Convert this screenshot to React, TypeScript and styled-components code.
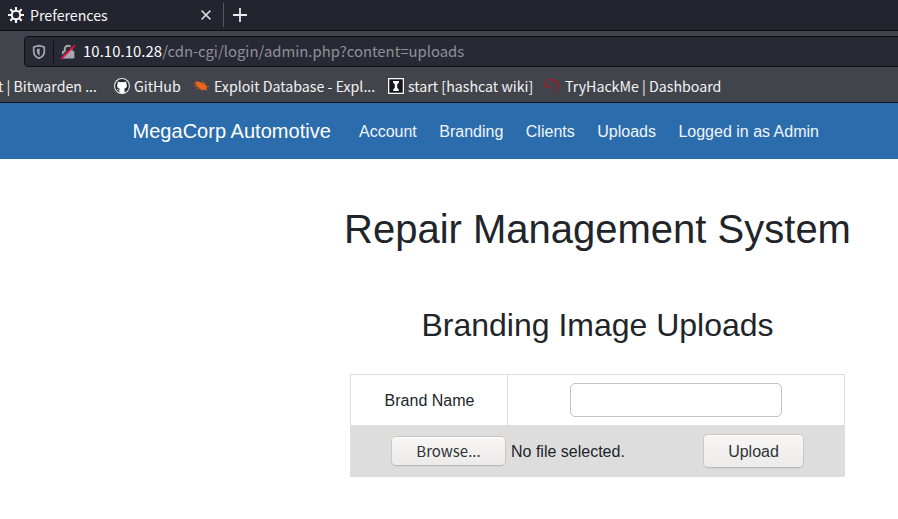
import React from "react";
import styled, { createGlobalStyle } from "styled-components";

const GlobalStyle = createGlobalStyle`
  *, *::before, *::after { box-sizing: border-box; }
  html, body { margin: 0; background: #fff; overflow: hidden; }
  body { font-family: "Liberation Sans", Arial, sans-serif; font-size: 16px; color: #212529; }
  svg { display: block; flex: none; }
`;

const Window = styled.div`
  width: 898px;
  height: 519px;
  overflow: hidden;
`;

const Chrome = styled.header`
  font-family: "Noto Sans CJK SC", "Noto Sans", sans-serif;
  font-size: 14.2px;
  color: #f3f3f4;
  white-space: nowrap;
`;

const TabStrip = styled.div`
  display: flex;
  align-items: center;
  height: 31px;
  padding: 0 0 1px 8px;
  background: #23252e;
  border-bottom: 1px solid #0d0e12;
`;

const TabTitle = styled.span`
  width: 171px;
  margin-left: 6px;
  line-height: 20px;
`;

const TabDivider = styled.span`
  width: 1px;
  height: 24px;
  margin: 0 9px 0 12px;
  background: #56585f;
`;

const Toolbar = styled.div`
  height: 36px;
  padding: 5px 0 0 24px;
  background: #42444b;
`;

const AddressBar = styled.div`
  display: flex;
  align-items: center;
  width: 890px;
  height: 31px;
  padding-left: 6px;
  background: #272a35;
  border: 1px solid #0f1014;
  border-radius: 4px;
`;

const AddressDivider = styled.span`
  width: 1px;
  height: 22px;
  margin: 0 6px;
  background: #0f1014;
`;

const Address = styled.span`
  margin-left: 7px;
  padding-bottom: 1px;
  font-size: 14.85px;
  line-height: 20px;
  color: #8f9197;
`;

const Host = styled.span`
  color: #fff;
  letter-spacing: 0.08px;
`;

const Bookmarks = styled.nav`
  display: flex;
  align-items: center;
  height: 36px;
  padding-top: 2px;
  background: #42444b;
  border-bottom: 1px solid #111217;
`;

const Bookmark = styled.span<{ $width: number; $gap?: number }>`
  display: flex;
  align-items: center;
  flex: none;
  gap: ${(p) => p.$gap ?? 4}px;
  width: ${(p) => p.$width}px;
  line-height: 20px;
`;

const CutBookmark = styled(Bookmark)`
  margin-left: -2px;
`;

const SiteNav = styled.nav`
  display: flex;
  align-items: center;
  height: 56px;
  padding-left: 132.5px;
  background: #2b6cad;
  color: #fff;
  white-space: nowrap;
`;

const Brand = styled.span`
  margin-right: 28px;
  font-size: 20px;
  line-height: 30px;
  letter-spacing: 0.03px;
`;

const Links = styled.div`
  display: flex;
  gap: 22.5px;
  padding-top: 2px;
  line-height: 24px;
  color: #f0f5fa;
`;

const Content = styled.main`
  width: 507px;
  margin-left: 344px;
  text-align: center;
`;

const Title = styled.h1`
  margin: 46px 0 0;
  font-size: 40px;
  font-weight: 400;
  line-height: 48px;
  white-space: nowrap;
`;

const Subtitle = styled.h2`
  margin: 53px 0 0;
  font-size: 32px;
  font-weight: 400;
  line-height: 38px;
`;

const Form = styled.form`
  width: 495px;
  margin: 30px 0 0 6px;
  border: 1px solid #ddd;
`;

const NameRow = styled.div`
  display: grid;
  grid-template-columns: 156px 1fr;
  height: 50px;
`;

const Cell = styled.div`
  display: flex;
  align-items: center;
  justify-content: center;
  & + & { border-left: 1px solid #ddd; }
`;

const Label = styled.label`
  padding: 2px 0 0 1px;
`;

const NameInput = styled.input`
  width: 212px;
  height: 34px;
  border: 1px solid #c8c3be;
  border-radius: 5px;
  background: #fff;
  outline: none;
`;

const FileRow = styled.div`
  display: flex;
  align-items: center;
  height: 51px;
  padding-left: 40px;
  background: #ddd;
`;

const Button = styled.button<{ $width: number; $height: number; $browser?: boolean }>`
  flex: none;
  width: ${(p) => p.$width}px;
  height: ${(p) => p.$height}px;
  padding: ${(p) => (p.$browser ? "0" : "2px 0 0")};
  font-family: ${(p) => (p.$browser ? '"Noto Sans CJK SC", "Noto Sans"' : '"Liberation Sans"')}, sans-serif;
  font-size: ${(p) => (p.$browser ? "15px" : "16px")};
  line-height: 20px;
  color: #2e3436;
  background: linear-gradient(#f7f6f5, #edebea);
  border: 1px solid #cdc7c2;
  border-bottom-color: #bfb8b1;
  border-radius: 5px;
  box-shadow: inset 0 1px #fff, 0 1px 1px rgba(0, 0, 0, 0.05);
`;

const FileStatus = styled.span`
  flex: none;
  width: 197px;
  padding: 2px 0 0 5px;
  text-align: left;
`;

const GearIcon = () => (
  <svg width="16" height="16" viewBox="0 0 16 16" fill="none" stroke="#f7f7f8">
    <circle cx="8" cy="8" r="4.2" strokeWidth="2" />
    <path strokeWidth="2.1" d="M8 0v3.5M8 12.5V16M0 8h3.5M12.5 8H16M2.3 2.3l2.5 2.5M11.2 11.2l2.5 2.5M13.7 2.3l-2.5 2.5M4.8 11.2l-2.5 2.5" />
  </svg>
);

const CloseIcon = () => (
  <svg width="10" height="10" viewBox="0 0 10 10" stroke="#d6d7d9" strokeWidth="1.5">
    <path d="M.6.6l8.8 8.8M9.4.6L.6 9.4" />
  </svg>
);

const PlusIcon = () => (
  <svg width="14" height="14" viewBox="0 0 14 14" stroke="#ececee" strokeWidth="1.8">
    <path d="M7 0v14M0 7h14" />
  </svg>
);

const ShieldIcon = () => (
  <svg width="16" height="16" viewBox="0 0 16 16">
    <path d="M8 1.7L13.3 3v4.2c0 3.4-2 5.9-5.3 7.1-3.3-1.2-5.3-3.7-5.3-7.1V3z" fill="none" stroke="#a6a8ad" strokeWidth="1.7" strokeLinejoin="round" />
    <path d="M8.2 4.4v7.4c1.8-1 2.7-2.6 2.7-4.7V5z" fill="#a6a8ad" transform="matrix(-1 0 0 1 16.8 0)" />
  </svg>
);

const LockIcon = () => (
  <svg width="16" height="16" viewBox="0 0 16 16">
    <path d="M4.8 7.4V5a3.3 3.3 0 0 1 6.6 0v2.4" fill="none" stroke="#a6a8ad" strokeWidth="2" />
    <rect x="2" y="6.8" width="12.4" height="7.8" rx="1.3" fill="#a6a8ad" />
    <path d="M.4 13.7L13.9 .3" stroke="#272a35" strokeWidth="1.6" />
    <path d="M1.2 14.9L14.8 1.3" stroke="#f30b43" strokeWidth="1.8" />
  </svg>
);

const GitHubIcon = () => (
  <svg width="16" height="16" viewBox="0 0 16 16">
    <circle cx="8" cy="8" r="8" fill="#e9e9e9" />
    <circle cx="8" cy="8" r="6.9" fill="#24272b" />
    <path fill="#fff" d="M5.4 15v-2.6c-1.7.3-2.2-.8-2.5-1.4l.8.1c.6.8.9 1 1.7.7.1-.5.3-.8.6-1-1.6-.2-2.9-1.1-2.9-3.4 0-.8.2-1.5.6-2-.2-.6-.2-1.3.1-2 .8 0 1.5.5 2 .8 1.4-.3 3-.3 4.4 0 .5-.3 1.2-.8 2-.8.3.7.3 1.4.1 2 .4.5.6 1.2.6 2 0 2.3-1.3 3.2-2.9 3.4.4.4.6.8.6 1.5V15a8 8 0 0 1-5.2 0z" />
  </svg>
);

const ExploitIcon = () => (
  <svg width="16" height="16" viewBox="0 0 16 16">
    <path fill="#ed641c" d="M2.2 3.5c2.5-.2 4.3.2 6 1.4 2.5 0 4.6 1.5 5.7 3.9l-.5 2.6c-2.8 1.3-5.8.5-7.6-1.6C4.2 8.8 2.8 6.8 2.2 3.5z" />
    <path fill="none" stroke="#d65d23" strokeWidth=".9" d="M.7 6l3.2.3M1.3 8.7l3.4-.2M4 11.3l2.3-1.6M8.6 12.8l.4-2.1M9.3 3.1L9 5.3M12 4.3l-1 2.2M13.2 8.4l2.2.1M12.5 11l1.8 1.2" />
  </svg>
);

const HashcatIcon = () => (
  <svg width="16" height="16" viewBox="0 0 16 16">
    <path fill="#f5f5f5" d="M0 0h16v16H0z" />
    <path fill="#151617" d="M1.3 1.3h13.4v13.4H1.3z" />
    <path fill="#f5f5f5" d="M5 3h6v1.5L9.2 6.6v2.8l1.6 2.3V13H5.2v-1.3l1.6-2.3V6.6L5 4.5z" />
  </svg>
);

const TryHackMeIcon = () => (
  <svg width="17" height="16" viewBox="0 0 17 16" fill="none">
    <path stroke="#b5161f" strokeWidth="1.1" d="M7 9H3.3C.2 8.7-.1 5.2 2.8 4.5 3.5 1 8.2.2 10 3.2c2.5-.5 4.2 1.2 3.8 3.2 1 .4 1.6 1 1.6 1.9" />
    <path stroke="#762832" strokeWidth=".9" d="M8 7.2h4M14 8.3h2M9.5 10h6M8.8 12h3M13.4 12H16M9.5 14h2M13 14h2" />
  </svg>
);

const links = ["Account", "Branding", "Clients", "Uploads", "Logged in as Admin"];

export default function App() {
  return (
    <Window>
      <GlobalStyle />
      <Chrome>
        <TabStrip>
          <GearIcon />
          <TabTitle>Preferences</TabTitle>
          <CloseIcon />
          <TabDivider />
          <PlusIcon />
        </TabStrip>
        <Toolbar>
          <AddressBar>
            <ShieldIcon />
            <AddressDivider />
            <LockIcon />
            <Address><Host>10.10.10.28</Host>/cdn-cgi/login/admin.php?content=uploads</Address>
          </AddressBar>
        </Toolbar>
        <Bookmarks>
          <CutBookmark $width={116}>t | Bitwarden ...</CutBookmark>
          <Bookmark $width={79}><GitHubIcon />GitHub</Bookmark>
          <Bookmark $width={195} $gap={5}><ExploitIcon />Exploit Database - Expl...</Bookmark>
          <Bookmark $width={156}><HashcatIcon />start [hashcat wiki]</Bookmark>
          <Bookmark $width={180}><TryHackMeIcon />TryHackMe | Dashboard</Bookmark>
        </Bookmarks>
      </Chrome>
      <SiteNav>
        <Brand>MegaCorp Automotive</Brand>
        <Links>{links.map((link) => <span key={link}>{link}</span>)}</Links>
      </SiteNav>
      <Content>
        <Title>Repair Management System</Title>
        <Subtitle>Branding Image Uploads</Subtitle>
        <Form onSubmit={(event) => event.preventDefault()}>
          <NameRow>
            <Cell><Label htmlFor="brand">Brand Name</Label></Cell>
            <Cell><NameInput id="brand" /></Cell>
          </NameRow>
          <FileRow>
            <Button type="button" $width={115} $height={30} $browser>Browse...</Button>
            <FileStatus>No file selected.</FileStatus>
            <Button type="submit" $width={101} $height={34}>Upload</Button>
          </FileRow>
        </Form>
      </Content>
    </Window>
  );
}
